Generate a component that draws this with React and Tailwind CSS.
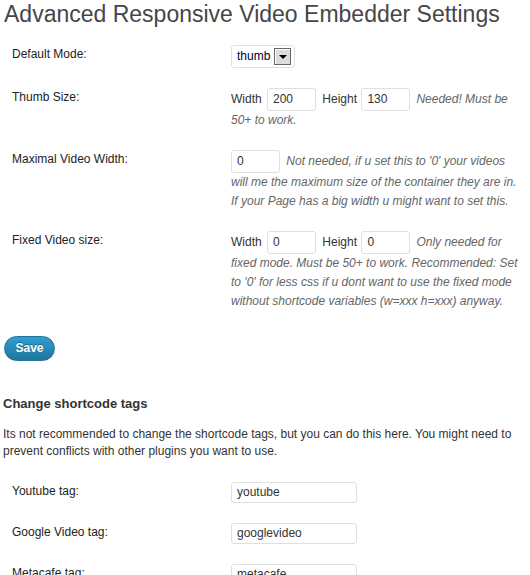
const rows = [
  { label: 'Youtube tag:', value: 'youtube' },
  { label: 'Google Video tag:', value: 'googlevideo' },
  { label: 'Metacafe tag:', value: 'metacafe' },
];

function TextBox({ value, className = '' }) {
  return (
    <span
      className={`inline-block align-middle h-[23px] rounded-[3px] border border-[#dfdfdf] bg-white pl-[5px] text-[12px] leading-[21px] text-[#333] not-italic ${className}`}
    >
      {value}
    </span>
  );
}

function Row({ label, children }) {
  return (
    <div className="flex">
      <div className="w-[231px] shrink-0 py-[10px] pl-[12px] text-[12px] leading-[19px] text-[#222]">{label}</div>
      <div className="flex-1 py-[10px] pr-[10px] text-[12px] leading-[19px] text-[#333]">{children}</div>
    </div>
  );
}

function Note({ children }) {
  return <span className="italic text-[#666]">{children}</span>;
}

export default function App() {
  return (
    <div className="h-[575px] bg-white font-['Liberation_Sans',Arial,sans-serif] overflow-hidden">
      <h2 className="pl-[4px] pt-[1px] text-[23px] leading-[27px] text-[#464646]">
        Advanced Responsive Video Embedder Settings
      </h2>

      <div className="mt-[7px]">
        <Row label="Default Mode:">
          <span className="inline-flex h-[23px] w-[64px] items-center rounded-[3px] border border-[#dfdfdf] bg-white pl-[5px] align-middle text-[#000033]">
            <span className="text-[12px]">thumb</span>
            <span className="ml-auto mr-[3px] flex h-[17px] w-[17px] items-center justify-center border border-[#666] bg-[#dcdcdc] shadow-[inset_1px_1px_0_#fff]">
              <span className="h-0 w-0 border-x-[4px] border-t-[4px] border-x-transparent border-t-black" />
            </span>
          </span>
        </Row>

        <Row label="Thumb Size:">
          Width <TextBox value="200" className="w-[49px] ml-[2px] mr-[3px]" /> Height{' '}
          <TextBox value="130" className="w-[49px] ml-[1px] mr-[6px]" />
          <Note>Needed! Must be 50+ to work.</Note>
        </Row>

        <Row label="Maximal Video Width:">
          <TextBox value="0" className="w-[49px] mr-[3px]" />{' '}
          <Note>
            Not needed, if u set this to '0' your videos will me the maximum size of the container they are in. If your
            Page has a big width u might want to set this.
          </Note>
        </Row>

        <Row label="Fixed Video size:">
          Width <TextBox value="0" className="w-[49px] ml-[2px] mr-[3px]" /> Height{' '}
          <TextBox value="0" className="w-[49px] ml-[1px] mr-[6px]" />
          <Note>
            Only needed for fixed mode. Must be 50+ to work. Recommended: Set to '0' for less css if u dont want to use
            the fixed mode without shortcode variables (w=xxx h=xxx) anyway.
          </Note>
        </Row>
      </div>

      <div className="mt-[14px] pl-[4px]">
        <button className="h-[25px] w-[51px] rounded-full border border-[#21759b] bg-gradient-to-b from-[#2e9fd2] to-[#21759b] text-[12px] font-bold text-white [text-shadow:0_-1px_0_rgba(0,0,0,0.3)]">
          Save
        </button>
      </div>

      <h3 className="mt-[34px] pl-[3px] text-[13px] font-bold leading-[18px] text-[#333]">Change shortcode tags</h3>
      <p className="mt-[13px] pl-[3px] pr-[10px] text-[12px] leading-[17px] text-[#333]">
        Its not recommended to change the shortcode tags, but you can do this here. You might need to prevent conflicts
        with other plugins you want to use.
      </p>

      <div className="mt-[12px]">
        {rows.map((r) => (
          <div key={r.label} className="flex">
            <div className="w-[231px] shrink-0 py-[10px] pl-[12px] text-[12px] leading-[19px] text-[#222]">{r.label}</div>
            <div className="py-[10px]">
              <span className="block h-[21px] w-[126px] rounded-[3px] border border-[#dfdfdf] bg-white pl-[5px] text-[12px] leading-[19px] text-[#333]">
                {r.value}
              </span>
            </div>
          </div>
        ))}
      </div>
    </div>
  );
}
